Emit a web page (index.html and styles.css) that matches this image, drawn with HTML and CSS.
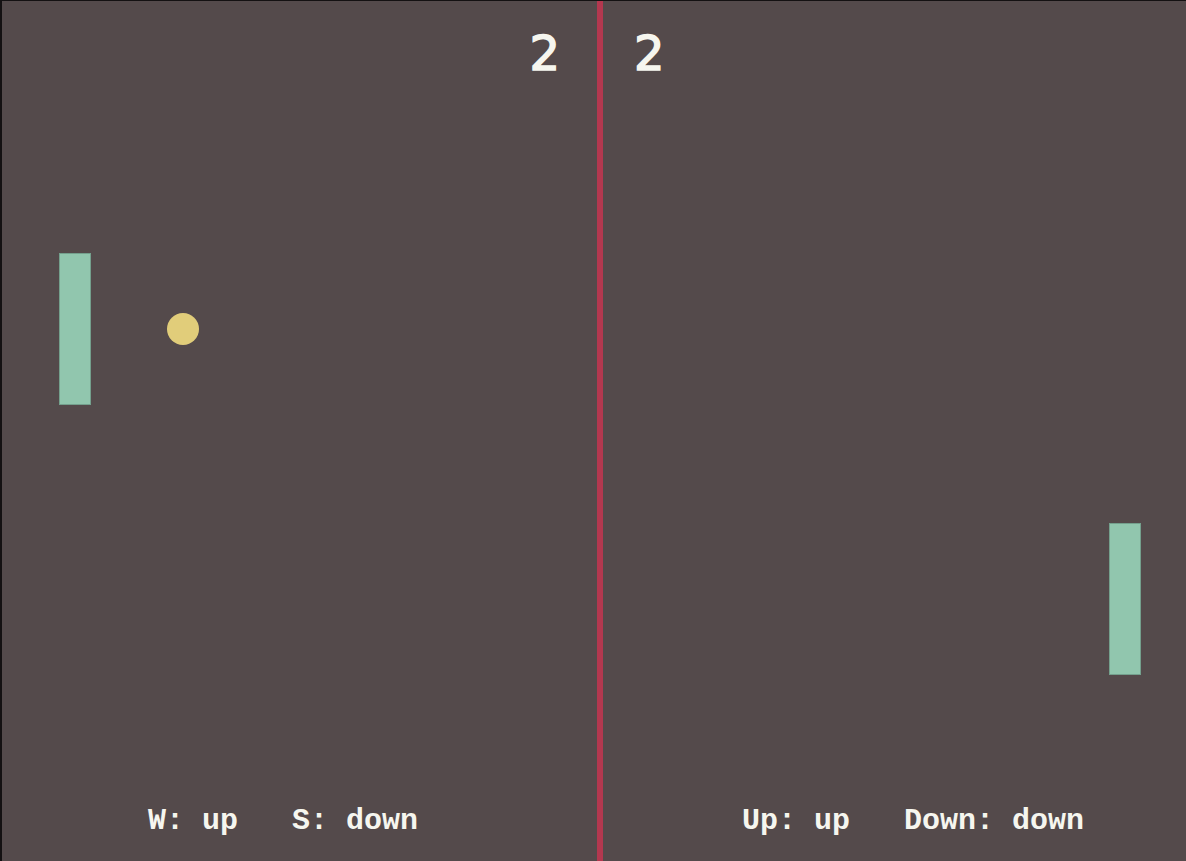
FILE: index.html
```html
<!DOCTYPE html>
<html>
<head>
<meta charset="utf-8">
<title>Pong</title>
<link rel="stylesheet" href="styles.css">
</head>
<body>
<div class="board">
  <div class="half half-left">
    <div class="score score-left">2</div>
    <div class="controls controls-left">W: up   S: down</div>
  </div>
  <div class="net"></div>
  <div class="half half-right">
    <div class="score score-right">2</div>
    <div class="controls controls-right">Up: up   Down: down</div>
  </div>
  <div class="paddle paddle-left"></div>
  <div class="paddle paddle-right"></div>
  <div class="ball"></div>
</div>
</body>
</html>
```
FILE: styles.css
```css
html, body {
  margin: 0;
  padding: 0;
  overflow: hidden;
  background: #544a4b;
}
.board {
  position: relative;
  box-sizing: border-box;
  width: 1186px;
  height: 861px;
  border-top: 1px solid #141112;
  border-left: 2px solid #141112;
  background: #544a4b;
  display: grid;
  grid-template-columns: 595px 6px 1fr;
}
.half {
  display: flex;
  flex-direction: column;
  min-width: 0;
}
.net {
  background: #b3384f;
}
.score {
  font-family: "DejaVu Sans", Verdana, sans-serif;
  font-size: 48px;
  line-height: 56px;
  color: #f6f6ef;
  -webkit-text-stroke: 1.5px #f6f6ef;
  padding-top: 24px;
}
.score-left {
  text-align: right;
  padding-right: 37px;
}
.score-right {
  padding-left: 31px;
}
.controls {
  margin-top: auto;
  font-family: "Liberation Mono", "Courier New", monospace;
  font-weight: bold;
  font-size: 30px;
  line-height: 34px;
  color: #f6f6ef;
  white-space: pre;
  padding-bottom: 23px;
}
.controls-left {
  padding-left: 146px;
}
.controls-right {
  padding-left: 139px;
}
.paddle {
  position: absolute;
  box-sizing: border-box;
  width: 32px;
  height: 152px;
  background: #91c6ae;
  border: 1px solid #74a08d;
}
.paddle-left {
  left: 57px;
  top: 252px;
}
.paddle-right {
  left: 1107px;
  top: 522px;
}
.ball {
  position: absolute;
  left: 165px;
  top: 312px;
  width: 32px;
  height: 32px;
  border-radius: 50%;
  background: #e1cd7a;
}
```
